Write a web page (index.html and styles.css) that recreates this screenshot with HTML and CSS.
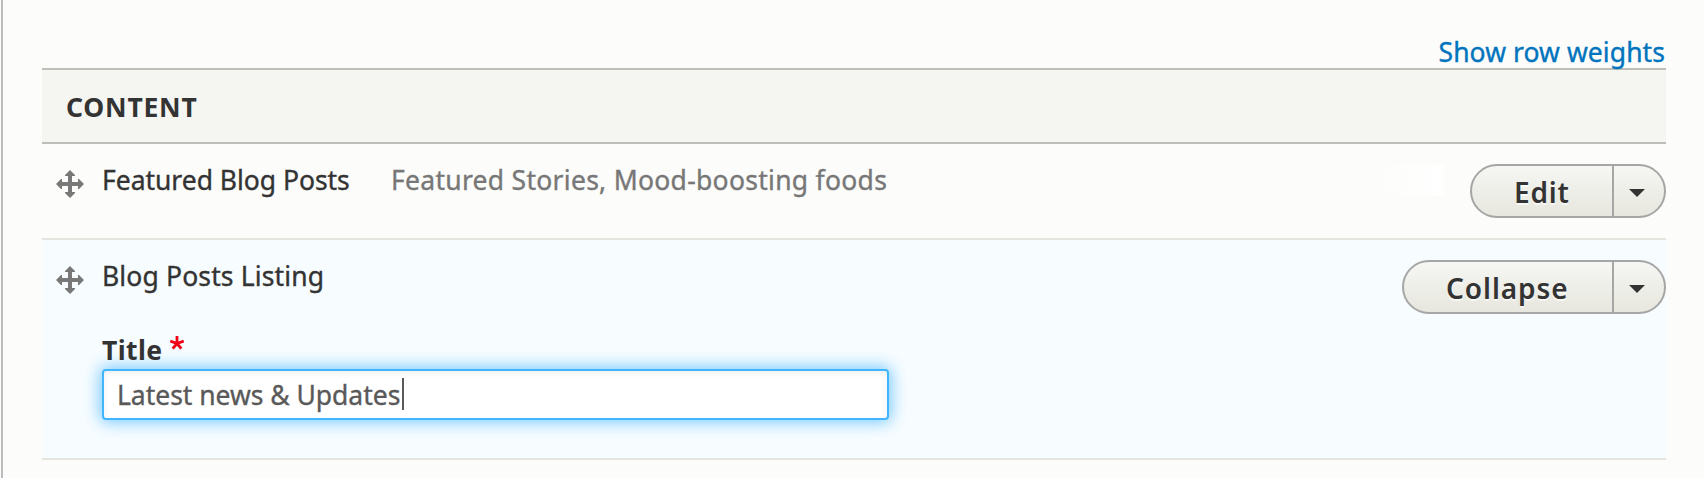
FILE: index.html
```html
<!DOCTYPE html>
<html lang="en">
<head>
<meta charset="utf-8">
<title>Content</title>
<link rel="stylesheet" href="styles.css">
</head>
<body>
<svg class="sprites" aria-hidden="true">
  <symbol id="move" viewBox="0 0 28 28"><path d="M14 0l5 5v1h-3v6h6V9h1l5 5-5 5h-1v-3h-6v6h3v1l-5 5-5-5v-1h3v-6H6v3H5l-5-5 5-5h1v3h6V6H9V5z"/></symbol>
  <symbol id="caret" viewBox="0 0 16 8"><path d="M0 0h16L8 8z"/></symbol>
</svg>
<main class="panel">
  <div class="toolbar"><a class="weights">Show row weights</a></div>
  <section class="table">
    <header class="head"><span class="head-text">CONTENT</span></header>
    <div class="row row-closed">
      <svg class="handle"><use href="#move"/></svg>
      <div class="name"><span class="name-featured">Featured Blog Posts</span></div>
      <div class="summary"><span>Featured Stories, Mood-boosting foods</span></div>
      <div class="glow"></div>
      <div class="dropbutton">
        <button class="action action-edit">Edit</button>
        <button class="toggle" aria-label="More actions"><svg class="arrow"><use href="#caret"/></svg></button>
      </div>
    </div>
    <div class="row row-open">
      <svg class="handle"><use href="#move"/></svg>
      <div class="body">
        <div class="name"><span class="name-listing">Blog Posts Listing</span></div>
        <div class="label"><span class="label-text">Title</span><svg class="required" viewBox="0 0 14 14"><path d="M7 7.5V0M7 7.5L.3 5M7 7.5L13.7 5M7 7.5l-4.3 5.2M7 7.5l4.3 5.2"/></svg></div>
        <div class="field" role="textbox"><span class="value">Latest news &amp; Updates</span><i class="cursor"></i></div>
      </div>
      <div class="dropbutton">
        <button class="action action-collapse">Collapse</button>
        <button class="toggle" aria-label="More actions"><svg class="arrow"><use href="#caret"/></svg></button>
      </div>
    </div>
  </section>
</main>
</body>
</html>
```

FILE: styles.css
```css
* { box-sizing: border-box; }
body {
  margin: 0;
  background: #fcfcfa;
  color: #333;
  font-family: "Noto Sans", sans-serif;
  font-size: 26.5px;
  line-height: 40px;
  white-space: nowrap;
}
.sprites { display: none; }
.panel {
  height: 478px;
  margin-left: 1px;
  padding: 32px 38px 0 39px;
  border-left: 2px solid #bbbcbe;
}
.toolbar { display: flex; justify-content: flex-end; height: 36px; padding-right: 1px; }
.weights { color: #0074bd; letter-spacing: 0.07px; }
.table { border-top: 2px solid #bfbfba; }
.head {
  height: 74px;
  padding: 17px 25px 0 24px;
  border-bottom: 2px solid #bfbfba;
  background: #f5f5f2;
  font-weight: 700;
  letter-spacing: 0.8px;
}
.row { display: flex; align-items: flex-start; border-bottom: 2px solid #e6e4df; }
.row-closed { height: 96px; padding: 16px 0 0 14px; }
.row-open { height: 220px; padding: 16px 0 0 14px; background: #f7fcff; }
.handle { flex: none; width: 28px; height: 28px; margin-top: 10px; fill: #787878; }
.row-closed .name, .body { margin-left: 18px; }
.row-closed .name { width: 289px; }
.summary { color: #777; letter-spacing: 0.28px; }
.name-featured { letter-spacing: -0.03px; }
.name-listing { letter-spacing: 0.14px; }
.value { letter-spacing: -0.03px; }
.weights, .name, .summary, .value { -webkit-text-stroke: 0.35px currentColor; }
.glow {
  width: 67px;
  height: 32px;
  margin: 4px 26px 0 auto;
  background: linear-gradient(90deg, #fcfcfa, #fff);
}
.dropbutton {
  display: flex;
  flex: none;
  height: 54px;
  margin-top: 4px;
  border: 2px solid #a6a6a6;
  border-radius: 27px;
  background: linear-gradient(#f6f6f3, #e7e7df);
  overflow: hidden;
}
.row-open .dropbutton { margin-left: auto; }
.action, .toggle { margin: 0; border: 0; background: none; color: #333; }
.action {
  padding: 1px 0 0 42px;
  font: 600 28px/50px "Noto Sans", sans-serif;
  text-align: left;
  text-shadow: 0 2px 0 rgba(255, 255, 255, 0.6);
}
.action-edit { width: 140px; letter-spacing: 0.8px; }
.action-collapse { width: 208px; letter-spacing: 0.95px; }
.toggle { display: flex; width: 52px; padding: 23px 0 0 15px; border-left: 2px solid #a6a6a6; }
.arrow { width: 16px; height: 8px; fill: #333; }
.label { display: flex; height: 39px; margin-top: 34px; font-weight: 700; letter-spacing: 0.4px; }
.required { width: 14px; height: 14px; margin: 6px 0 0 8px; fill: none; stroke: #f00015; stroke-width: 2.8; }
.body { width: 787px; }
.field {
  display: flex;
  height: 51px;
  padding: 4px 0 0 13px;
  border: 2px solid #40b6ff;
  border-radius: 4px;
  background: #fff;
  box-shadow: 0 0 16px 2px #73c8ff, inset 0 2px 6px rgba(0, 0, 0, 0.07);
  color: #595959;
}
.cursor { width: 2px; height: 32px; margin: 3px 0 0 2px; background: #595959; }
```
